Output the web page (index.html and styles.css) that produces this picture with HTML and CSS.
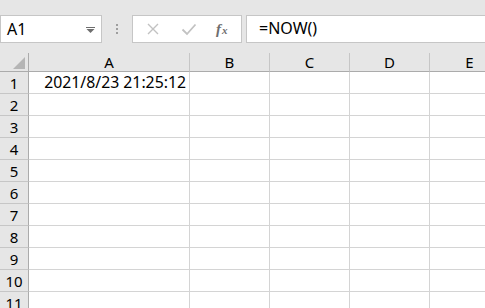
FILE: index.html
```html
<!DOCTYPE html>
<html lang="zh-CN">
  <head>
    <meta charset="UTF-8" />
    <title>NOW</title>
    <link rel="stylesheet" href="styles.css">
  </head>
  <body>
    <div class="bar">
      <div class="namebox">
        <span class="name">A1</span>
        <svg class="drop" width="9" height="6" viewBox="0 0 9 6"><rect x="0" y="0" width="9" height="1" fill="#6e6e6e"/><path d="M0.5 2 L8.5 2 L4.5 6 Z" fill="#6e6e6e"/></svg>
      </div>
      <div class="dots"><i></i><i></i><i></i></div>
      <div class="btns">
        <svg width="14" height="14" viewBox="0 0 14 14"><path d="M2 2 L12 12 M12 2 L2 12" stroke="#c2c2c2" stroke-width="1.4" fill="none"/></svg>
        <svg width="16" height="14" viewBox="0 0 16 14"><path d="M1.5 7.5 L6 12 L14.5 2.5" stroke="#c2c2c2" stroke-width="1.8" fill="none"/></svg>
        <span class="fx">f<sub>x</sub></span>
      </div>
      <div class="formula">=NOW()</div>
    </div>

    <div class="sheet">
      <div class="corner"><svg width="12" height="12" viewBox="0 0 12 12"><path d="M12 0 L12 12 L0 12 Z" fill="#b5b5b5"/></svg></div>
      <div class="col">A</div>
      <div class="col">B</div>
      <div class="col">C</div>
      <div class="col">D</div>
      <div class="col">E</div>

      <div class="row">1</div>
      <div class="cell num">2021/8/23 21:25:12</div><div class="cell"></div><div class="cell"></div><div class="cell"></div><div class="cell"></div>
      <div class="row">2</div>
      <div class="cell"></div><div class="cell"></div><div class="cell"></div><div class="cell"></div><div class="cell"></div>
      <div class="row">3</div>
      <div class="cell"></div><div class="cell"></div><div class="cell"></div><div class="cell"></div><div class="cell"></div>
      <div class="row">4</div>
      <div class="cell"></div><div class="cell"></div><div class="cell"></div><div class="cell"></div><div class="cell"></div>
      <div class="row">5</div>
      <div class="cell"></div><div class="cell"></div><div class="cell"></div><div class="cell"></div><div class="cell"></div>
      <div class="row">6</div>
      <div class="cell"></div><div class="cell"></div><div class="cell"></div><div class="cell"></div><div class="cell"></div>
      <div class="row">7</div>
      <div class="cell"></div><div class="cell"></div><div class="cell"></div><div class="cell"></div><div class="cell"></div>
      <div class="row">8</div>
      <div class="cell"></div><div class="cell"></div><div class="cell"></div><div class="cell"></div><div class="cell"></div>
      <div class="row">9</div>
      <div class="cell"></div><div class="cell"></div><div class="cell"></div><div class="cell"></div><div class="cell"></div>
      <div class="row">10</div>
      <div class="cell"></div><div class="cell"></div><div class="cell"></div><div class="cell"></div><div class="cell"></div>
      <div class="row">11</div>
      <div class="cell"></div><div class="cell"></div><div class="cell"></div><div class="cell"></div><div class="cell"></div>
    </div>
  </body>
</html>
```

FILE: styles.css
```css
* {
  box-sizing: border-box;
}
body {
  margin: 0;
  width: 485px;
  height: 308px;
  overflow: hidden;
  background: #e6e6e6;
  font-family: "Noto Sans", "Noto Sans CJK SC", sans-serif;
  color: #000;
}

.bar {
  display: flex;
  align-items: center;
  height: 53px;
  padding-top: 15px;
  padding-bottom: 10px;
}

.namebox {
  width: 102px;
  height: 28px;
  background: #fff;
  border: 1px solid #c6c6c6;
  display: flex;
  align-items: center;
  justify-content: space-between;
  padding: 0 6px 0 6px;
}
.name {
  font-size: 16px;
}
.drop {
  display: block;
  margin-top: 1px;
}

.dots {
  width: 30px;
  display: flex;
  flex-direction: column;
  align-items: center;
  gap: 2px;
}
.dots i {
  display: block;
  width: 2px;
  height: 2px;
  background: #9e9e9e;
}

.btns {
  width: 110px;
  height: 28px;
  background: #fff;
  border: 1px solid #c6c6c6;
  display: flex;
  align-items: center;
  padding-left: 13px;
  gap: 21px;
}
.btns svg {
  display: block;
}
.fx {
  font-family: "Liberation Serif", serif;
  font-style: italic;
  font-weight: bold;
  font-size: 15px;
  color: #6e6e6e;
  margin-left: -2px;
}
.fx sub {
  font-size: 11px;
  vertical-align: 0;
  margin-left: 1px;
}

.formula {
  margin-left: 4px;
  flex: 1;
  height: 28px;
  background: #fff;
  border: 1px solid #c6c6c6;
  border-right: none;
  font-size: 16px;
  padding-left: 12px;
  line-height: 25px;
}

.sheet {
  display: grid;
  grid-template-columns: 29px 161px 80px 80px 80px 80px;
  grid-template-rows: 19px repeat(11, 22px);
  background: #fff;
  font-size: 15px;
}

.corner {
  background: #e6e6e6;
  border-right: 1px solid #ababab;
  border-bottom: 1px solid #ababab;
  display: flex;
  align-items: flex-end;
  justify-content: flex-end;
  padding: 0 3px 2px 0;
}
.corner svg {
  display: block;
}

.col {
  background: #e6e6e6;
  border-right: 1px solid #c6c6c6;
  border-bottom: 1px solid #ababab;
  text-align: center;
  line-height: 18px;
}

.row {
  background: #e6e6e6;
  border-right: 1px solid #ababab;
  border-bottom: 1px solid #c6c6c6;
  text-align: center;
  line-height: 22px;
}

.cell {
  border-right: 1px solid #d4d4d4;
  border-bottom: 1px solid #d4d4d4;
  line-height: 21px;
}
.num {
  text-align: right;
  padding-right: 3px;
  font-size: 15.8px;
}
```
